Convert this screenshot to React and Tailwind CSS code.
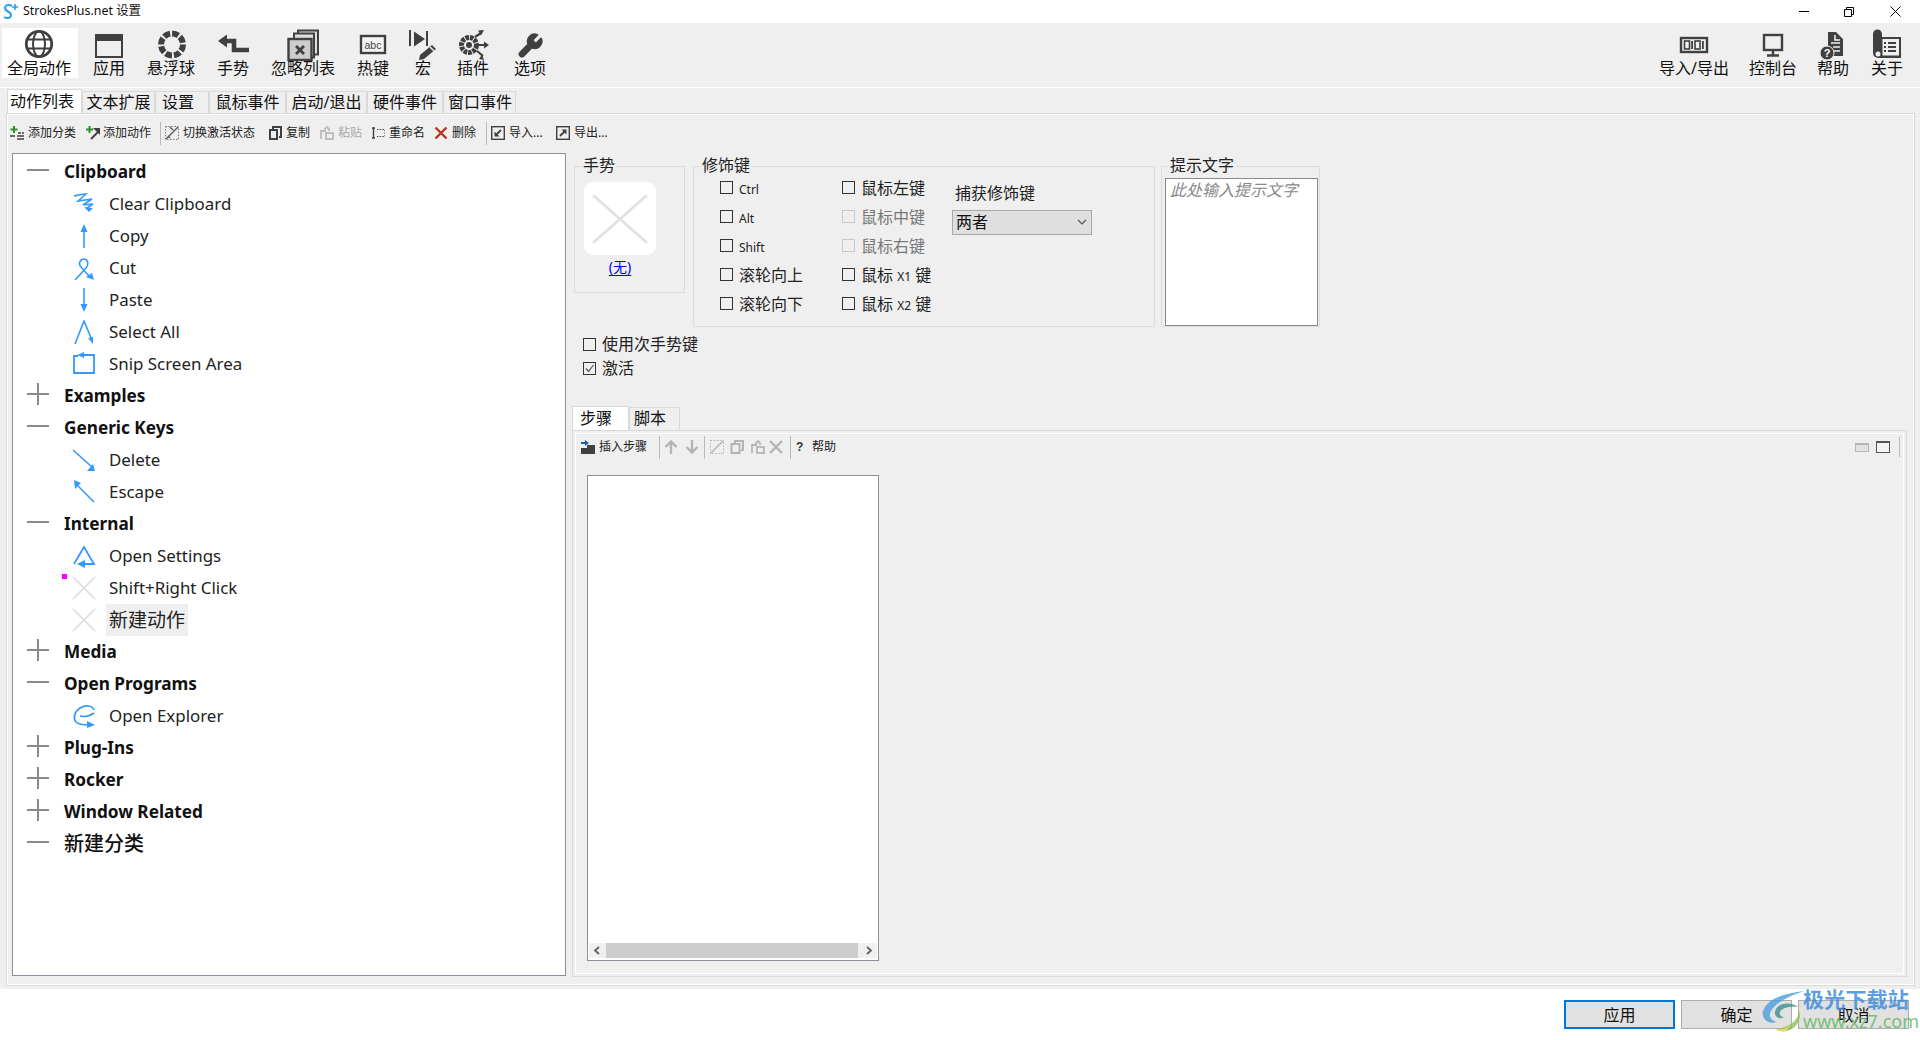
const ui = "font-['Noto_Sans','Noto_Sans_CJK_SC',sans-serif]";

function Svg({ w = 34, h = 34, vb, children, className = '' }) {
  return (
    <svg width={w} height={h} viewBox={vb || `0 0 ${w} ${h}`} fill="none" className={`block shrink-0 ${className}`}>
      {children}
    </svg>
  );
}

const dark = '#404040';

const GlobeIcon = () => (
  <Svg>
    <circle cx="17" cy="15" r="12.7" stroke={dark} strokeWidth="2.8" />
    <ellipse cx="17" cy="15" rx="6" ry="12.7" stroke={dark} strokeWidth="2" />
    <path d="M5 10.500h24M5 19.500h24" stroke={dark} strokeWidth="2" />
  </Svg>
);
const WindowIcon = () => (
  <Svg>
    <rect x="4" y="6" width="26" height="22" stroke={dark} strokeWidth="2" />
    <rect x="3" y="5" width="28" height="7" fill={dark} />
  </Svg>
);
const RingIcon = () => (
  <Svg>
    <circle cx="18" cy="15.500" r="11" stroke={dark} strokeWidth="6" strokeDasharray="6.6 2" />
  </Svg>
);
const GestureIcon = () => (
  <Svg>
    <path d="M9 12h9v9h15" stroke={dark} strokeWidth="4.6" />
    <path d="M11 5.500 2 12l9 6.500z" fill={dark} />
  </Svg>
);
const IgnoreIcon = () => (
  <Svg>
    <rect x="12" y="1.500" width="20" height="24" fill="#ddd" stroke={dark} strokeWidth="2" />
    <rect x="8" y="4.500" width="20" height="24" fill="#ddd" stroke={dark} strokeWidth="2" />
    <rect x="2.500" y="10" width="23" height="21" fill="#ccc" stroke={dark} strokeWidth="2.400" />
    <path d="m10 17 8 8m0-8-8 8" stroke={dark} strokeWidth="2.800" />
  </Svg>
);
const HotkeyIcon = () => (
  <Svg>
    <rect x="5" y="7" width="24" height="17" fill="#f4f4f4" stroke={dark} strokeWidth="2.400" />
    <text x="17" y="19.500" textAnchor="middle" fontSize="10.500" fill={dark} fontFamily="Liberation Sans">abc</text>
  </Svg>
);
const MacroIcon = () => (
  <Svg>
    <path d="M4 1v16" stroke={dark} strokeWidth="2" />
    <path d="M8 2.500 19 10 8 17.500z" fill={dark} />
    <path d="M21 2v15" stroke={dark} strokeWidth="2" />
    <path d="m14 26 12-10 4 4-12 10-5 1z" fill={dark} />
    <path d="m24 18 4 4" stroke="#efefef" strokeWidth="1.500" />
  </Svg>
);
const PluginIcon = () => (
  <Svg>
    <circle cx="13" cy="16" r="7.500" stroke={dark} strokeWidth="5" strokeDasharray="3.600 .9" />
    <circle cx="13" cy="16" r="3" fill={dark} />
    <path d="m19 8 6-4m-4 12h9m-9 6 6 5" stroke={dark} strokeWidth="2.200" />
    <path d="m28 1-6 .5 3 5zM33 16l-5-3.500v7zM28 31l-5-1 3-4.500z" fill={dark} />
  </Svg>
);
const WrenchIcon = () => (
  <svg width="28" height="28" viewBox="0 0 24 24" fill={dark} stroke={dark} strokeWidth="1.500" strokeLinejoin="round" className="block mt-[3px] shrink-0">
    <path d="M14.700 6.300a1 1 0 0 0 0 1.400l1.600 1.600a1 1 0 0 0 1.400 0l3.770-3.770a6 6 0 0 1-7.940 7.940l-6.910 6.910a2.120 2.120 0 0 1-3-3l6.910-6.910a6 6 0 0 1 7.940-7.940l-3.760 3.760z" />
  </svg>
);
const BinaryIcon = () => (
  <Svg>
    <rect x="4" y="9" width="26" height="14" stroke={dark} strokeWidth="2.400" />
    <rect x="7.500" y="12" width="5" height="8" stroke={dark} strokeWidth="1.600" />
    <rect x="14.200" y="12" width="1.800" height="8" fill={dark} />
    <rect x="18" y="12" width="5" height="8" stroke={dark} strokeWidth="1.600" />
    <rect x="25" y="12" width="1.800" height="8" fill={dark} />
  </Svg>
);
const MonitorIcon = () => (
  <Svg>
    <rect x="8" y="6" width="18" height="15" stroke={dark} strokeWidth="2.400" />
    <path d="M17 22v4M11 26.500h12" stroke={dark} strokeWidth="2.400" />
  </Svg>
);
const HelpDocIcon = () => (
  <Svg>
    <path d="M10 3h10l7 7v17H12V3z" fill={dark} />
    <path d="M19 6v5h5M15 14h9M17 18h7M18 22h6" stroke="#efefef" strokeWidth="1.600" />
    <circle cx="11" cy="24" r="7" fill={dark} stroke="#efefef" />
    <text x="11" y="28" textAnchor="middle" fontSize="11" fontWeight="700" fill="#fff" fontFamily="Liberation Sans">?</text>
  </Svg>
);
const ScrollIcon = () => (
  <Svg>
    <path d="M3 5a4.500 4.500 0 0 1 9 0v3h19v21H8a5 5 0 0 1-5-5z" fill={dark} />
    <rect x="12" y="9.500" width="17.500" height="17.500" fill="#efefef" stroke={dark} strokeWidth="1" />
    <path d="M14 14h2m2 0h8M14 18h2m2 0h8M14 22h2m2 0h8" stroke={dark} strokeWidth="1.800" />
    <circle cx="8" cy="25" r="2.500" fill="#efefef" />
  </Svg>
);

const leftTools = [
  { label: '全局动作', w: 'w-[76px] pr-[2px]', icon: <GlobeIcon />, active: true },
  { label: '应用', w: 'w-[62px]', icon: <WindowIcon /> },
  { label: '悬浮球', w: 'w-[62px]', icon: <RingIcon /> },
  { label: '手势', w: 'w-[62px]', icon: <GestureIcon /> },
  { label: '忽略列表', w: 'w-[78px]', icon: <IgnoreIcon /> },
  { label: '热键', w: 'w-[62px]', icon: <HotkeyIcon /> },
  { label: '宏', w: 'w-[38px]', icon: <MacroIcon /> },
  { label: '插件', w: 'w-[62px]', icon: <PluginIcon /> },
  { label: '选项', w: 'w-[52px]', icon: <WrenchIcon /> },
];

const rightTools = [
  { label: '导入/导出', w: 'w-[88px]', icon: <BinaryIcon /> },
  { label: '控制台', w: 'w-[70px]', icon: <MonitorIcon /> },
  { label: '帮助', w: 'w-[50px]', icon: <HelpDocIcon /> },
  { label: '关于', w: 'w-[58px]', icon: <ScrollIcon /> },
];

function ToolButton({ tool }) {
  return (
    <div className={`${tool.w} h-[50px] flex flex-col items-center ${tool.active ? 'bg-white' : ''}`}>
      <div className="h-[32px] mt-[1px] flex items-start justify-center">{tool.icon}</div>
      <span className="h-[17px] leading-[15px] text-[16px] text-[#111] whitespace-nowrap">{tool.label}</span>
    </div>
  );
}

const tabs = [
  { label: '动作列表', w: 'w-[75px]', active: true, cls: 'justify-start pl-[2px]' },
  { label: '文本扩展', w: 'w-[73px]' },
  { label: '设置', w: 'w-[54px]', cls: 'justify-start pl-[6px]' },
  { label: '鼠标事件', w: 'w-[77px]' },
  { label: '启动/退出', w: 'w-[81px]' },
  { label: '硬件事件', w: 'w-[76px]' },
  { label: '窗口事件', w: 'w-[73px]', cls: 'justify-center pl-[1px]' },
];

const green = '#2f8f2f';

const smallIcons = {
  addCat: (
    <Svg w={14} h={14}>
      <path d="M4 0v7M.5 3.500h7" stroke={green} strokeWidth="2" />
      <path d="M8 7h3m1 0h2M0 10h5m2 0h7M7 13h7" stroke={dark} strokeWidth="1.300" />
    </Svg>
  ),
  addAct: (
    <Svg w={14} h={14}>
      <path d="M3.500 0v7M0 3.500h7" stroke={green} strokeWidth="2" />
      <path d="m5 13 7-7" stroke={dark} strokeWidth="2" />
      <path d="M7 2h7v7z" fill={dark} />
    </Svg>
  ),
  toggle: (
    <Svg w={14} h={14}>
      <rect x=".5" y=".5" width="13" height="13" stroke="#777" strokeDasharray="1.500 1.500" />
      <path d="M1 13 13 1M5 1l3 3m-5 6 2 2" stroke="#555" strokeWidth="1.300" />
    </Svg>
  ),
  copy: (
    <Svg w={14} h={14}>
      <path d="M5 3V1h8v10h-2" stroke={dark} strokeWidth="2" />
      <rect x="2" y="4" width="7" height="9" stroke={dark} strokeWidth="2" />
    </Svg>
  ),
  paste: (
    <Svg w={14} h={14}>
      <path d="M1 13V5h4V3l2-2 2 2v2" stroke="#bbb" strokeWidth="1.800" />
      <rect x="6" y="7" width="7" height="6" stroke="#bbb" strokeWidth="1.800" />
    </Svg>
  ),
  rename: (
    <Svg w={14} h={14}>
      <path d="M1 2h3M1 12h3M2.500 2v10" stroke={dark} strokeWidth="1.400" />
      <path d="M6 3.500h8v7H6" stroke={dark} strokeDasharray="1.500 1.200" />
    </Svg>
  ),
  del: (
    <Svg w={14} h={14}>
      <path d="m1.500 1.500 11 11m0-11-11 11" stroke="#b8341f" strokeWidth="2.400" />
    </Svg>
  ),
  imp: (
    <Svg w={14} h={14}>
      <rect x=".7" y=".7" width="12.600" height="12.600" stroke={dark} strokeWidth="1.400" />
      <path d="M10 4 5 9" stroke={dark} strokeWidth="1.800" />
      <path d="M3.500 5.500v5h5z" fill={dark} />
    </Svg>
  ),
  exp: (
    <Svg w={14} h={14}>
      <rect x=".7" y=".7" width="12.600" height="12.600" stroke={dark} strokeWidth="1.400" />
      <path d="m4 10 5-5" stroke={dark} strokeWidth="1.800" />
      <path d="M10.500 3.500v5l-5-5z" fill={dark} />
    </Svg>
  ),
};

function SmallTool({ w, icon, label, gray, gap = 'gap-[4px]' }) {
  return (
    <div className={`${w} flex items-center ${gap} shrink-0`}>
      {icon}
      <span className={`text-[12px] whitespace-nowrap ${gray ? 'text-[#a8a8a8]' : 'text-[#222]'}`}>{label}</span>
    </div>
  );
}

const Sep = ({ w = 'w-[5px]' }) => (
  <div className={`${w} h-[23px] shrink-0`}>
    <div className="w-[1px] h-full bg-[#b9b9b9]" />
  </div>
);

const blue = '#3399ff';
const TreeSvg = ({ children }) => <Svg w={24} h={24}>{children}</Svg>;

const treeIcons = {
  clear: (
    <TreeSvg>
      <path d="M2 4c5-1 9-2 12-2L6 9l14-2-9 6 10-1-6 4" stroke={blue} strokeWidth="1.600" />
      <path d="m17 20-5-5 9 1z" fill={blue} />
    </TreeSvg>
  ),
  up: (
    <TreeSvg>
      <path d="M12 24V6" stroke={blue} strokeWidth="1.600" />
      <path d="m12 0 3.500 8h-7z" fill={blue} />
    </TreeSvg>
  ),
  cut: (
    <TreeSvg>
      <path d="M3 24 14 12c3-3 2-9-2-9s-6 5-3 8l8 9" stroke={blue} strokeWidth="1.600" />
      <path d="m22 24-8-3 6-4z" fill={blue} />
    </TreeSvg>
  ),
  down: (
    <TreeSvg>
      <path d="M12 0v18" stroke={blue} strokeWidth="1.600" />
      <path d="m12 24-3.500-8h7z" fill={blue} />
    </TreeSvg>
  ),
  selectAll: (
    <TreeSvg>
      <path d="M3 24 12 1l8 19" stroke={blue} strokeWidth="1.600" />
      <path d="m21 24-5-6 5-1z" fill={blue} />
    </TreeSvg>
  ),
  snip: (
    <TreeSvg>
      <path d="M9 3h13v18H2V4h4" stroke={blue} strokeWidth="1.800" />
      <path d="m5 3 7-3v6z" fill={blue} />
    </TreeSvg>
  ),
  downRight: (
    <TreeSvg>
      <path d="m1 2 19 17" stroke={blue} strokeWidth="1.600" />
      <path d="M23 23h-8l6-7z" fill={blue} />
    </TreeSvg>
  ),
  upLeft: (
    <TreeSvg>
      <path d="m22 22L5 5" stroke={blue} strokeWidth="1.600" />
      <path d="m2 0 7 3-6 6z" fill={blue} />
    </TreeSvg>
  ),
  triangle: (
    <TreeSvg>
      <path d="M2 20 12 3l10 17H9" stroke={blue} strokeWidth="1.800" />
      <path d="m5 20 8-4v8z" fill={blue} />
    </TreeSvg>
  ),
  none: (
    <TreeSvg>
      <path d="m1 1 22 22m0-22L1 23" stroke="#e2e2e2" strokeWidth="2" />
    </TreeSvg>
  ),
  loop: (
    <TreeSvg>
      <path d="M22 6c-2-5-9-5-14-2C2 8 1 14 4 18c3 3 8 3 13 3M8 12c4 1 10 0 14-3" stroke={blue} strokeWidth="1.700" />
      <path d="m23 21-8 3v-7z" fill={blue} />
    </TreeSvg>
  ),
};

const tree = [
  { group: 'Clipboard', open: true },
  { label: 'Clear Clipboard', icon: 'clear' },
  { label: 'Copy', icon: 'up' },
  { label: 'Cut', icon: 'cut' },
  { label: 'Paste', icon: 'down' },
  { label: 'Select All', icon: 'selectAll' },
  { label: 'Snip Screen Area', icon: 'snip' },
  { group: 'Examples' },
  { group: 'Generic Keys', open: true },
  { label: 'Delete', icon: 'downRight' },
  { label: 'Escape', icon: 'upLeft' },
  { group: 'Internal', open: true },
  { label: 'Open Settings', icon: 'triangle' },
  { label: 'Shift+Right Click', icon: 'none', marker: true },
  { label: '新建动作', icon: 'none', selected: true },
  { group: 'Media' },
  { group: 'Open Programs', open: true },
  { label: 'Open Explorer', icon: 'loop' },
  { group: 'Plug-Ins' },
  { group: 'Rocker' },
  { group: 'Window Related' },
  { group: '新建分类', open: true, cjk: true },
];

function Expander({ open }) {
  return (
    <div className="relative w-[22px] h-[22px] -mt-[5px] shrink-0">
      <div className="absolute left-0 top-[10px] w-[22px] h-[2px] bg-[#8a8a8a]" />
      {!open && <div className="absolute left-[10px] top-0 w-[2px] h-[22px] bg-[#8a8a8a]" />}
    </div>
  );
}

function TreeRow({ item }) {
  if (item.group) {
    return (
      <div className="h-[32px] flex items-center pl-[14px]">
        <Expander open={item.open} />
        <span className={`ml-[15px] text-[#111] whitespace-nowrap ${item.cjk ? 'text-[20px] font-medium' : 'text-[17.200px] font-bold'}`}>
          {item.group}
        </span>
      </div>
    );
  }
  return (
    <div className="relative h-[32px] flex items-center pl-[59px]">
      {item.marker && <div className="absolute left-[49px] top-[2px] w-[5px] h-[5px] bg-[#ff00ff]" />}
      {treeIcons[item.icon]}
      <span
        className={`ml-[10px] h-[32px] leading-[32px] px-[3px] whitespace-nowrap text-[#222] ${
          item.selected ? 'bg-[#efefef] text-[19px]' : 'text-[16.900px]'
        }`}
      >
        {item.label}
      </span>
    </div>
  );
}

function Check({ label, checked, disabled, children, w = '' }) {
  return (
    <div className={`flex items-center gap-[6px] h-[24px] ${w}`}>
      <span
        className={`w-[13px] h-[13px] border flex items-center justify-center shrink-0 ${
          disabled ? 'border-[#c8c8c8]' : 'border-[#333]'
        }`}
      >
        {checked && (
          <svg width="11" height="11" viewBox="0 0 11 11" fill="none">
            <path d="m2 5.500 2.500 3L9.500 2" stroke="#555" strokeWidth="1.200" />
          </svg>
        )}
      </span>
      <span className={`text-[16px] whitespace-nowrap ${disabled ? 'text-[#777]' : 'text-[#222]'}`}>
        {label}
        {children}
      </span>
    </div>
  );
}

function GroupBox({ title, className, labelLeft, children }) {
  return (
    <div className={`relative border border-[#dcdcdc] shrink-0 ${className}`}>
      <span className={`absolute -top-[12px] ${labelLeft} h-[20px] leading-[20px] px-[1px] bg-[#efefef] text-[16px] text-[#222]`}>
        {title}
      </span>
      {children}
    </div>
  );
}

const Small = ({ children }) => <span className="text-[12px]">{children}</span>;

const Mod = ({ children, disabled }) => (
  <div className="h-[29px] flex items-center">
    <Check disabled={disabled} label={children} />
  </div>
);

function GestureGroup() {
  return (
    <GroupBox title="手势" labelLeft="left-[7px]" className="w-[111px] h-[127px]">
      <div className="pl-[9px] pt-[15px] w-[81px]">
        <div className="w-[72px] h-[73px] rounded-[9px] bg-white">
          <svg width="72" height="73" viewBox="0 0 72 73" fill="none">
            <path d="m10 14 52 46m0-46L10 60" stroke="#e2e2e2" strokeWidth="3" strokeLinecap="round" />
          </svg>
        </div>
        <div className="mt-[1px] text-center text-[14px] text-[#0000ee] underline underline-offset-[3px]">(无)</div>
      </div>
    </GroupBox>
  );
}

function ModifierGroup() {
  return (
    <GroupBox title="修饰键" labelLeft="left-[7px]" className="w-[462px] h-[161px] flex pl-[26px] pt-[6px]">
      <div className="w-[122px]">
        <Mod><Small>Ctrl</Small></Mod>
        <Mod><Small>Alt</Small></Mod>
        <Mod><Small>Shift</Small></Mod>
        <Mod>滚轮向上</Mod>
        <Mod>滚轮向下</Mod>
      </div>
      <div className="w-[110px]">
        <Mod>鼠标左键</Mod>
        <Mod disabled>鼠标中键</Mod>
        <Mod disabled>鼠标右键</Mod>
        <Mod>鼠标 <Small>X1</Small> 键</Mod>
        <Mod>鼠标 <Small>X2</Small> 键</Mod>
      </div>
      <div className="w-[140px]">
        <div className="mt-[10px] pl-[3px] h-[20px] leading-[20px] text-[16px] text-[#222]">捕获修饰键</div>
        <div className="mt-[7px] h-[25px] border border-[#a9a9a9] bg-[#dfdfdf] flex items-center justify-between pl-[3px] pr-[4px]">
          <span className="text-[16px] text-[#111] -translate-y-[1px]">两者</span>
          <svg width="10" height="7" viewBox="0 0 10 7" fill="none">
            <path d="m1 1 4 4 4-4" stroke="#555" strokeWidth="1.200" />
          </svg>
        </div>
      </div>
    </GroupBox>
  );
}

function StepToolbar() {
  const g = '#b4b4b4';
  return (
    <div className="h-[32px] flex items-center pl-[8px] pr-[6px]">
      <SmallTool
        w="w-[78px]"
        label="插入步骤"
        icon={
          <Svg w={14} h={14}>
            <path d="M0 14V8h6V5h8v9z" fill={dark} />
            <path d="M0 3h5" stroke="#1f5fa8" strokeWidth="2" />
            <path d="M4 0v6l4-3z" fill="#1f5fa8" />
          </Svg>
        }
      />
      <Sep />
      <div className="w-[21px] shrink-0">
        <Svg w={14} h={14}><path d="M7 14V2M1.500 7 7 1.500 12.500 7" stroke={g} strokeWidth="2.400" /></Svg>
      </div>
      <div className="w-[19px] shrink-0">
        <Svg w={14} h={14}><path d="M7 0v12M1.500 7 7 12.500 12.500 7" stroke={g} strokeWidth="2.400" /></Svg>
      </div>
      <Sep w="w-[6px]" />
      <div className="w-[20px] shrink-0">
        <Svg w={14} h={14}>
          <rect x=".5" y=".5" width="13" height="13" stroke={g} strokeDasharray="1.500 1.500" />
          <path d="M1 13 13 1" stroke={g} strokeWidth="1.400" />
        </Svg>
      </div>
      <div className="w-[21px] shrink-0">
        <Svg w={14} h={14}>
          <path d="M5 3V1h8v9h-2" stroke={g} strokeWidth="2" />
          <rect x="1.500" y="4" width="8" height="9" stroke={g} strokeWidth="2" />
        </Svg>
      </div>
      <div className="w-[18px] shrink-0">
        <Svg w={14} h={14}>
          <path d="M1 13V5h4V3l2-2 2 2v2" stroke={g} strokeWidth="1.800" />
          <rect x="6" y="7" width="7" height="6" stroke={g} strokeWidth="1.800" />
        </Svg>
      </div>
      <div className="w-[21px] shrink-0">
        <Svg w={14} h={14}><path d="m1 1 12 12m0-12L1 13" stroke={g} strokeWidth="2.400" /></Svg>
      </div>
      <Sep w="w-[6px]" />
      <span className="w-[16px] text-[12px] font-bold text-[#333] font-['Liberation_Sans',sans-serif]">?</span>
      <span className="text-[12px] text-[#222]">帮助</span>
      <div className="ml-auto flex items-center gap-[7px]">
        <div className="w-[14px] h-[9px] border border-[#b5b5b5] border-t-2 bg-[#e2e2e2]" />
        <div className="w-[14px] h-[12px] border border-[#555] border-t-2 bg-[#f4f4f4]" />
        <div className="ml-[2px] w-[1px] h-[20px] bg-[#b9b9b9]" />
      </div>
    </div>
  );
}

function ScrollArrow({ left }) {
  return (
    <svg width="17" height="15" viewBox="0 0 17 15" fill="none" className="shrink-0">
      <path d={left ? 'm10 4-4 3.500 4 3.500' : 'm7 4 4 3.500L7 11'} stroke="#606060" strokeWidth="1.800" />
    </svg>
  );
}

function Watermark() {
  return (
    <div className="absolute right-[1px] top-[987px] flex items-start pointer-events-none">
      <svg width="44" height="42" viewBox="0 0 44 42" fill="none" className="opacity-80 -mr-[3px] mt-[3px]">
        <path d="M42 1C26 3 6 7 1 21c-2 8 6 14 14 11-6-1-9-6-6-11C14 12 28 6 42 1z" fill="#4b9fdd" />
        <path d="M36 17c-8-6-22-4-23 5-1 5 5 8 9 5-3 0-5-2-4-5 2-5 11-6 18-5z" fill="#3f8f8f" />
        <path d="M36 19c3 9-8 19-22 20 2 2 7 3 11 2 11-3 16-15 11-22z" fill="#8cc152" />
        <path d="M14 39c6 1 12-1 16-5l-6 7c-4 1-8 0-10-2z" fill="#e6d640" />
      </svg>
      <div className="flex flex-col">
        <span className="text-[21px] leading-[24px] font-bold text-[#3f8fdc] opacity-85 tracking-[0.2px]">极光下载站</span>
        <span className="text-[18px] leading-[20px] text-[#66bb66] opacity-85">www.xz7.com</span>
      </div>
    </div>
  );
}

export default function App() {
  return (
    <div className={`relative w-[1920px] h-[1040px] flex flex-col overflow-hidden bg-white ${ui}`}>
      <div className="h-[23px] flex items-center pl-[3px] shrink-0">
        <svg width="15" height="17" viewBox="0 0 15 17" fill="none" className="shrink-0">
          <path d="M9 3C6 1 2 2 2 5c0 4 6 3 6 7 0 3-4 4-7 2" stroke="#2a9df4" strokeWidth="2" />
          <path d="M12 1v6M9 4h6" stroke="#2a9df4" strokeWidth="1.600" />
        </svg>
        <span className="ml-[5px] text-[12.400px] text-[#111] whitespace-nowrap">StrokesPlus.net 设置</span>
        <div className="ml-auto flex items-center">
          <div className="w-[45px] flex justify-center">
            <div className="w-[10px] h-[1px] bg-black" />
          </div>
          <div className="w-[46px] flex justify-center">
            <svg width="10" height="10" viewBox="0 0 10 10" fill="none">
              <path d="M2.500 2.500V.5h7v7h-2M.5 2.500h7v7h-7z" stroke="#000" />
            </svg>
          </div>
          <div className="w-[46px] flex justify-center mr-[2px]">
            <svg width="11" height="11" viewBox="0 0 11 11" fill="none">
              <path d="m.5.5 10 10m0-10-10 10" stroke="#000" />
            </svg>
          </div>
        </div>
      </div>

      <div className="flex-1 min-h-0 bg-[#efefef] flex flex-col">
        <div className="h-[65px] shrink-0 flex justify-between pt-[5px] pl-[2px] pr-[4px] border-b border-white">
          <div className="flex">
            {leftTools.map((t) => <ToolButton key={t.label} tool={t} />)}
          </div>
          <div className="flex">
            {rightTools.map((t) => <ToolButton key={t.label} tool={t} />)}
          </div>
        </div>

        <div className="h-[25px] shrink-0 flex items-end pl-[7px]">
          {tabs.map((t) => (
            <div
              key={t.label}
              className={`${t.w} flex items-center pb-[2px] border border-[#d9d9d9] border-b-0 text-[16px] text-[#111] whitespace-nowrap ${
                t.cls || 'justify-center'
              } ${t.active ? 'h-[24px] bg-white' : 'h-[22px]'}`}
            >
              {t.label}
            </div>
          ))}
        </div>

        <div className="mx-[5px] ml-[6px] h-[873px] shrink-0 border border-[#d9d9d9] shadow-[inset_0_0_0_1px_#fff] flex flex-col">
          <div className="h-[38px] shrink-0 flex items-center pl-[3px]">
            <SmallTool w="w-[76px]" icon={smallIcons.addCat} label="添加分类" />
            <SmallTool w="w-[74px]" icon={smallIcons.addAct} label="添加动作" gap="gap-[3px]" />
            <Sep />
            <SmallTool w="w-[103px]" icon={smallIcons.toggle} label="切换激活状态" />
            <SmallTool w="w-[52px]" icon={smallIcons.copy} label="复制" />
            <SmallTool w="w-[51px]" icon={smallIcons.paste} label="粘贴" gray />
            <SmallTool w="w-[63px]" icon={smallIcons.rename} label="重命名" />
            <SmallTool w="w-[52px]" icon={smallIcons.del} label="删除" />
            <Sep />
            <SmallTool w="w-[65px]" icon={smallIcons.imp} label="导入..." />
            <SmallTool w="w-[65px]" icon={smallIcons.exp} label="导出..." />
          </div>

          <div className="flex pl-[5px] pt-[1px]">
            <div className="w-[554px] h-[823px] shrink-0 border border-[#8a8f99] bg-white pt-[2px]">
              {tree.map((item) => (
                <TreeRow key={item.group || item.label} item={item} />
              ))}
            </div>

            <div className="ml-[6px] w-[1335px] flex flex-col">
              <div className="flex pl-[2px] pt-[13px]">
                <GestureGroup />
                <div className="w-[8px] shrink-0" />
                <ModifierGroup />
                <div className="w-[6px] shrink-0" />
                <GroupBox title="提示文字" labelLeft="left-[7px]" className="w-[159px] h-[161px] pl-[3px] pt-[11px]">
                  <div className="w-[153px] h-[148px] border border-[#8a8a8a] bg-white px-[4px] text-[16px] italic leading-[20px] pt-[1px] text-[#888]">
                    此处输入提示文字
                  </div>
                </GroupBox>
              </div>

              <div className="mt-[5px] pl-[11px]">
                <Check label="使用次手势键" />
                <Check label="激活" checked />
              </div>

              <div className="mt-[26px] h-[24px] flex items-end">
                <div className="w-[57px] h-[24px] bg-white border border-[#d9d9d9] border-b-0 flex items-center pl-[7px] pb-[2px] text-[16px] text-[#111]">步骤</div>
                <div className="w-[51px] h-[23px] border border-[#d9d9d9] border-b-0 flex items-center pl-[4px] pb-[2px] text-[16px] text-[#111]">脚本</div>
              </div>

              <div className="h-[547px] border border-[#d9d9d9] shadow-[inset_0_0_0_2px_#efefef,inset_0_0_0_3px_#fff]">
                <StepToolbar />
                <div className="ml-[14px] mt-[12px] w-[292px] h-[486px] border border-[#8a8f99] bg-white flex flex-col justify-end pb-[2px] px-[1px]">
                  <div className="h-[15px] bg-[#f0f0f0] flex items-center">
                    <ScrollArrow left />
                    <div className="w-[252px] h-full bg-[#cdcdcd]" />
                    <div className="flex-1 flex justify-end">
                      <ScrollArrow />
                    </div>
                  </div>
                </div>
              </div>
            </div>
          </div>
        </div>

        <div className="h-[3px] shrink-0" />
      </div>

      <div className="h-[51px] shrink-0 flex items-center justify-end gap-[6px] pr-[11px]">
        <button className="w-[111px] h-[29px] border-2 border-[#0078d7] bg-[#e1e1e1] text-[16px] text-[#111]">应用</button>
        <button className="w-[111px] h-[29px] border border-[#adadad] bg-[#e1e1e1] text-[16px] text-[#111]">确定</button>
        <button className="w-[111px] h-[29px] border border-[#adadad] bg-[#e1e1e1] text-[16px] text-[#111]">取消</button>
      </div>

      <Watermark />
    </div>
  );
}
